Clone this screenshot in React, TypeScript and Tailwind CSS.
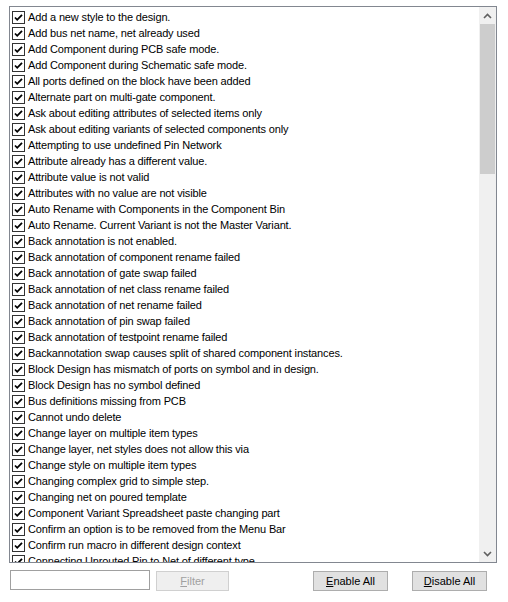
const items = [
  "Add a new style to the design.",
  "Add bus net name, net already used",
  "Add Component during PCB safe mode.",
  "Add Component during Schematic safe mode.",
  "All ports defined on the block have been added",
  "Alternate part on multi-gate component.",
  "Ask about editing attributes of selected items only",
  "Ask about editing variants of selected components only",
  "Attempting to use undefined Pin Network",
  "Attribute already has a different value.",
  "Attribute value is not valid",
  "Attributes with no value are not visible",
  "Auto Rename with Components in the Component Bin",
  "Auto Rename. Current Variant is not the Master Variant.",
  "Back annotation is not enabled.",
  "Back annotation of component rename failed",
  "Back annotation of gate swap failed",
  "Back annotation of net class rename failed",
  "Back annotation of net rename failed",
  "Back annotation of pin swap failed",
  "Back annotation of testpoint rename failed",
  "Backannotation swap causes split of shared component instances.",
  "Block Design has mismatch of ports on symbol and in design.",
  "Block Design has no symbol defined",
  "Bus definitions missing from PCB",
  "Cannot undo delete",
  "Change layer on multiple item types",
  "Change layer, net styles does not allow this via",
  "Change style on multiple item types",
  "Changing complex grid to simple step.",
  "Changing net on poured template",
  "Component Variant Spreadsheet paste changing part",
  "Confirm an option is to be removed from the Menu Bar",
  "Confirm run macro in different design context",
  "Connecting Unrouted Pin to Net of different type",
];

const CheckBox = () => (
  <span className="w-[13px] h-[13px] shrink-0 border border-[#333333] bg-white flex items-center justify-center">
    <svg width="11" height="11" viewBox="0 0 11 11">
      <path d="M2 5.5 L4.2 7.8 L9 2.8" fill="none" stroke="#000" strokeWidth="1.8" />
    </svg>
  </span>
);

export default function App() {
  return (
    <div className="w-[508px] h-[602px] bg-white overflow-hidden text-[11px] text-black" style={{ fontFamily: '"Liberation Sans", Arial, sans-serif' }}>
      <div className="ml-[9px] mt-[6px] w-[488px] h-[557px] border border-[#828790] flex">
        <div className="flex-1 overflow-hidden pt-[2px] pl-[2px]">
          {items.map((t) => (
            <div key={t} className="h-[16px] flex items-center gap-[3px] whitespace-nowrap tracking-[-0.15px]">
              <CheckBox />
              <span>{t}</span>
            </div>
          ))}
        </div>
        <div className="w-[17px] bg-[#f0f0f0] flex flex-col">
          <div className="h-[17px] flex items-center justify-center">
            <svg width="9" height="6" viewBox="0 0 9 6">
              <path d="M1 5 L4.5 1.5 L8 5" fill="none" stroke="#606060" strokeWidth="1.6" />
            </svg>
          </div>
          <div className="h-[150px] mx-[1px] bg-[#cdcdcd]" />
          <div className="flex-1" />
          <div className="h-[17px] flex items-center justify-center">
            <svg width="9" height="6" viewBox="0 0 9 6">
              <path d="M1 1 L4.5 4.5 L8 1" fill="none" stroke="#606060" strokeWidth="1.6" />
            </svg>
          </div>
        </div>
      </div>
      <div className="flex items-start mt-[7px]">
        <input className="ml-[10px] w-[140px] h-[20px] border border-[#a0a0a0] outline-none px-1" />
        <button className="ml-[6px] mt-[1px] w-[73px] h-[20px] border border-[#d0d0d0] bg-[#efefef] text-[#a0a0a0]">
          <span className="underline">F</span>ilter
        </button>
        <button className="ml-[84px] mt-[1px] w-[75px] h-[20px] border border-[#adadad] bg-[#e1e1e1]">
          <span className="underline">E</span>nable All
        </button>
        <button className="ml-[24px] mt-[1px] w-[75px] h-[20px] border border-[#adadad] bg-[#e1e1e1]">
          <span className="underline">D</span>isable All
        </button>
      </div>
    </div>
  );
}
